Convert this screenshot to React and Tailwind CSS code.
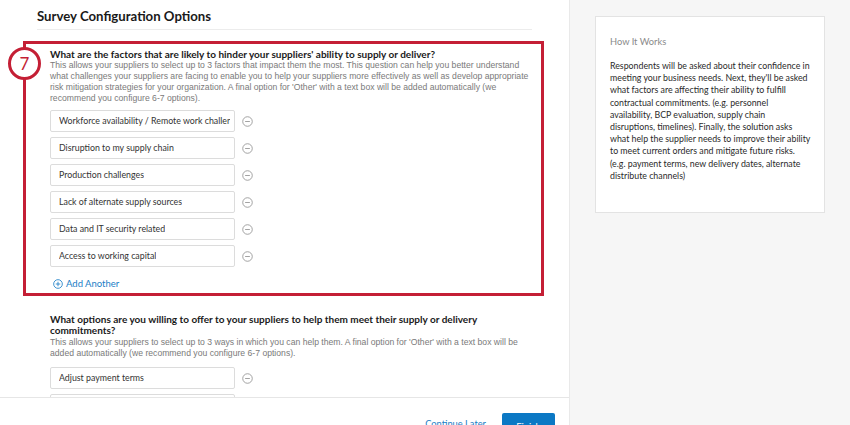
import React from 'react';

const factors = [
  'Workforce availability / Remote work challenges',
  'Disruption to my supply chain',
  'Production challenges',
  'Lack of alternate supply sources',
  'Data and IT security related',
  'Access to working capital',
];

const q1Lines = [
  'This allows your suppliers to select up to 3 factors that impact them the most. This question can help you better understand',
  'what challenges your suppliers are facing to enable you to help your suppliers more effectively as well as develop appropriate',
  "risk mitigation strategies for your organization. A final option for 'Other' with a text box will be added automatically (we",
  'recommend you configure 6-7 options).',
];

const q2Lines = [
  "This allows your suppliers to select up to 3 ways in which you can help them. A final option for 'Other' with a text box will be",
  'added automatically (we recommend you configure 6-7 options).',
];

const howLines = [
  'Respondents will be asked about their confidence in',
  "meeting your business needs. Next, they'll be asked",
  'what factors are affecting their ability to fulfill',
  'contractual commitments. (e.g. personnel',
  'availability, BCP evaluation, supply chain',
  'disruptions, timelines). Finally, the solution asks',
  'what help the supplier needs to improve their ability',
  'to meet current orders and mitigate future risks.',
  '(e.g. payment terms, new delivery dates, alternate',
  'distribute channels)',
];

const MinusIcon = () => (
  <svg width="11" height="11" viewBox="0 0 12 12" className="shrink-0">
    <circle cx="6" cy="6" r="5.2" fill="none" stroke="#9a9a9a" strokeWidth="1" />
    <line x1="3.4" y1="6" x2="8.6" y2="6" stroke="#9a9a9a" strokeWidth="1" />
  </svg>
);

const OptionRow = ({ label }) => (
  <div className="flex items-center gap-[7px]">
    <div className="w-[185px] h-[22px] border border-[#dcdcdc] rounded-[2px] bg-white flex items-center pl-[8px] pr-[4px] overflow-hidden">
      <span className="text-[8.8px] text-[#333] whitespace-nowrap overflow-hidden">{label}</span>
    </div>
    <MinusIcon />
  </div>
);

const Lines = ({ lines, className, style }) => (
  <div className={className} style={style}>
    {lines.map((l) => (
      <div key={l} className="whitespace-nowrap">{l}</div>
    ))}
  </div>
);

const desc = { fontFamily: '"Liberation Sans", Arial, sans-serif' };

const App = () => {
  return (
    <div
      className="flex w-[850px] h-[425px] overflow-hidden bg-white"
      style={{ fontFamily: 'Lato, "Open Sans", sans-serif' }}
    >
      {/* main column */}
      <div className="w-[569px] h-[425px] flex flex-col overflow-hidden shrink-0">
        <div className="h-[397px] overflow-hidden shrink-0">
          <div className="pl-[37px] pr-[37px] pt-[6px]">
            <h1 className="text-[13.2px] font-bold text-[#1a1a1a] leading-[20px]">Survey Configuration Options</h1>
            <div className="mt-[3px] h-px bg-[#ececec]" />
          </div>

          {/* highlighted question */}
          <div className="relative ml-[23px] mt-[11px] w-[521px] h-[255px] border-[3px] border-[#c41f35] pl-[24px] pr-0 pt-[4px]">
            <div className="absolute left-[-18px] top-[3px] w-[33px] h-[33px] rounded-full border-[3px] border-[#c41f35] bg-white flex items-center justify-center">
              <span className="text-[17px] text-[#c41f35] leading-none">7</span>
            </div>
            <h2 className="text-[10px] font-bold text-[#1a1a1a] leading-[12px]">
              What are the factors that are likely to hinder your suppliers' ability to supply or deliver?
            </h2>
            <Lines lines={q1Lines} className="text-[8.65px] text-[#7a7a7a] leading-[11px]" style={desc} />
            <div className="mt-[6px] flex flex-col gap-[5px]">
              {factors.map((f) => (
                <OptionRow key={f} label={f} />
              ))}
            </div>
            <div className="mt-[10px] ml-[3px] flex items-center gap-[3px] text-[#1a7ec6]">
              <svg width="10" height="10" viewBox="0 0 12 12">
                <circle cx="6" cy="6" r="5.2" fill="none" stroke="#1a7ec6" strokeWidth="1" />
                <line x1="3.3" y1="6" x2="8.7" y2="6" stroke="#1a7ec6" strokeWidth="1" />
                <line x1="6" y1="3.3" x2="6" y2="8.7" stroke="#1a7ec6" strokeWidth="1" />
              </svg>
              <span className="text-[9.5px] leading-[13px]">Add Another</span>
            </div>
          </div>

          {/* second question */}
          <div className="pl-[50px] pr-[38px] pt-[18px]">
            <h2 className="text-[10px] font-bold text-[#1a1a1a] leading-[11px]">
              What options are you willing to offer to your suppliers to help them meet their supply or delivery commitments?
            </h2>
            <Lines lines={q2Lines} className="text-[8.65px] text-[#7a7a7a] leading-[11px] mt-[1px]" style={desc} />
            <div className="mt-[8px] flex flex-col gap-[5px]">
              <OptionRow label="Adjust payment terms" />
              <OptionRow label="New delivery dates" />
            </div>
          </div>
        </div>

        {/* footer */}
        <div className="border-t border-[#e6e6e6] bg-white flex justify-end items-start gap-[16px] pr-[14px] pt-[15px] h-[60px] shrink-0">
          <span className="text-[9.3px] text-[#1a7ec6] leading-[13px] mt-[4px]">Continue Later</span>
          <button className="w-[53px] h-[26px] bg-[#0b78c4] rounded-[2px] text-white text-[9.5px] leading-[13px]">Finish</button>
        </div>
      </div>

      {/* side panel */}
      <div className="flex-1 h-[425px] bg-[#f6f6f6] border-l border-[#e9e9e9] pl-[25px] pt-[16px]">
        <div className="w-[230px] h-[197px] bg-white border border-[#e3e3e3] pl-[14px] pr-[8px] pt-[18px]">
          <div className="text-[9.3px] text-[#8a8a8a] leading-[13px]">How It Works</div>
          <Lines lines={howLines} className="mt-[12px] text-[8.8px] text-[#2a2a2a] leading-[12.2px]" />
        </div>
      </div>
    </div>
  );
};

export default App;
